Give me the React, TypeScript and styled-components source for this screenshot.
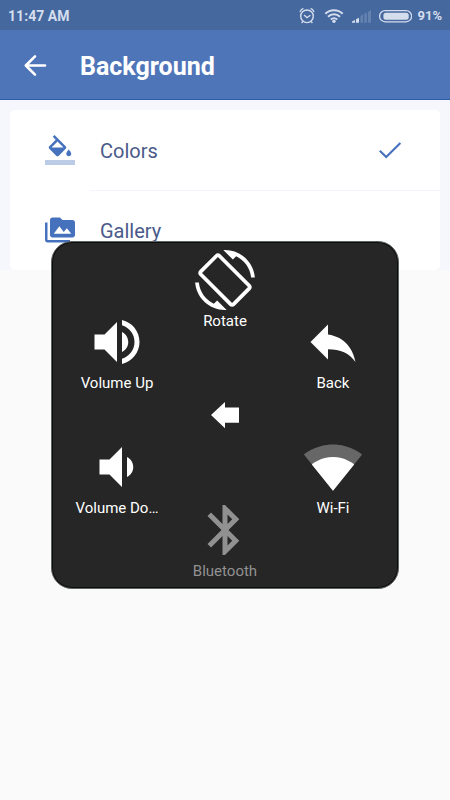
import React from "react";
import styled, { createGlobalStyle } from "styled-components";

const GlobalStyle = createGlobalStyle`
  *, *::before, *::after { box-sizing: border-box; }
  body { margin: 0; background: #fafafa; font-family: Roboto, "Liberation Sans", sans-serif; }
`;

const Screen = styled.div`
  position: relative;
  width: 450px;
  height: 800px;
  overflow: hidden;
  background: #fafafa;
`;

const StatusBar = styled.div`
  display: flex;
  align-items: center;
  justify-content: space-between;
  height: 30px;
  padding: 2px 8px 0;
  background: #45689f;
  color: #d5deed;
  font-size: 14px;
  font-weight: 700;
  line-height: 28px;
`;

const Clock = styled.span`
  letter-spacing: 0.05px;
`;

const StatusIcons = styled.div`
  display: flex;
  align-items: center;
  height: 28px;
`;

const BatteryText = styled.span`
  margin-left: 5px;
  font-size: 13px;
`;

const Toolbar = styled.header`
  display: flex;
  align-items: center;
  gap: 30px;
  height: 70px;
  padding: 2px 20px 0;
  background: #4f75b9;
  border-bottom: 1px solid #2c5da9;
  color: #fff;
`;

const Title = styled.h1`
  margin: 0;
  padding-top: 2px;
  font-size: 25px;
  font-weight: 700;
  line-height: 32px;
`;

const Section = styled.main`
  padding: 10px 10px 0;
  height: 170px;
  background: #f5f7fd;
`;

const Card = styled.div`
  height: 160px;
  border-radius: 5px;
  background: #fff;
`;

const Row = styled.div`
  display: flex;
  align-items: center;
  height: 80px;
  padding-left: 35px;
  color: #4672bd;
`;

const RowBody = styled.div<{ $divided?: boolean }>`
  display: flex;
  flex: 1;
  align-items: center;
  justify-content: space-between;
  height: 80px;
  margin-left: 15px;
  padding: 0 35px 0 10px;
  box-shadow: ${(p) => (p.$divided ? "0 1px 0 #f3f5fc" : "none")};
`;

const RowLabel = styled.span`
  padding-top: 1px;
  color: #4a5a8a;
  font-size: 20px;
  line-height: 26px;
`;

const Panel = styled.div`
  position: absolute;
  left: 51px;
  top: 241px;
  display: flex;
  justify-content: center;
  width: 348px;
  height: 348px;
  border: 1px solid #5f6465;
  border-radius: 21px;
  background: #262626;
  box-shadow: inset 0 0 0 1px #0c0c0c;
`;

const Column = styled.div<{ $top: number; $bottom: number }>`
  display: flex;
  flex-direction: column;
  align-items: center;
  justify-content: space-between;
  width: 108px;
  padding: ${(p) => p.$top}px 0 ${(p) => p.$bottom}px;
`;

const Action = styled.button<{ $dim?: boolean }>`
  display: flex;
  flex-direction: column;
  align-items: center;
  width: 108px;
  height: 83px;
  padding: 0;
  border: 0;
  background: none;
  color: ${(p) => (p.$dim ? "#919191" : "#fff")};
  font-family: inherit;
`;

const ActionLabel = styled.span`
  font-size: 15px;
  line-height: 23px;
  text-align: center;
  white-space: nowrap;
`;

const Icon = styled.svg`
  display: block;
  flex: none;
`;

const IconButton = styled.button`
  padding: 0;
  border: 0;
  background: none;
  color: inherit;
`;

const actions = {
  rotate: (
    <path d="M16.48 2.52c3.27 1.55 5.61 4.72 5.97 8.48h1.5C23.44 4.84 18.29 0 12 0l-.66.03 3.81 3.81 1.33-1.32zm-6.25-.77c-.59-.59-1.54-.59-2.12 0L1.75 8.11c-.59.59-.59 1.54 0 2.12l12.02 12.02c.59.59 1.54.59 2.12 0l6.36-6.36c.59-.59.59-1.54 0-2.12L10.23 1.75zm4.6 19.44L2.81 9.17l6.36-6.36 12.02 12.02-6.36 6.36zm-7.31.29C4.25 19.94 1.91 16.76 1.55 13H.05C.56 19.16 5.71 24 12 24l.66-.03-3.81-3.81-1.33 1.32z" />
  ),
  volumeUp: (
    <path d="M3 9v6h4l5 5V4L7 9H3zm13.5 3c0-1.77-1.02-3.29-2.5-4.03v8.05c1.48-.73 2.5-2.25 2.5-4.02zM14 3.23v2.06c2.89.86 5 3.54 5 6.71s-2.11 5.85-5 6.71v2.06c4.01-.91 7-4.49 7-8.77s-2.99-7.86-7-8.77z" />
  ),
  volumeDown: (
    <path d="M18.5 12c0-1.77-1.02-3.29-2.5-4.03v8.05c1.48-.73 2.5-2.25 2.5-4.02zM5 9v6h4l5 5V4L9 9H5z" />
  ),
  back: <path d="M10 9V5l-7 7 7 7v-4.1c5 0 8.5 1.6 11 5.1-1-5-4-10-11-11z" />,
  wifi: (
    <>
      <path
        opacity=".3"
        d="M12.01 21.49L23.64 7c-.45-.34-4.93-4-11.64-4C5.28 3 .81 6.66.36 7l11.63 14.49.01.01.01-.01z"
      />
      <path d="M3.53 10.95l8.46 10.54.01.01.01-.01 8.46-10.54C20.04 10.62 16.81 8 12 8c-4.81 0-8.04 2.62-8.47 2.95z" />
    </>
  ),
  bluetooth: (
    <path d="M17.71 7.71L12 2h-1v7.59L6.41 5 5 6.41 10.59 12 5 17.59 6.41 19 11 14.41V22h1l5.71-5.71-4.3-4.29 4.3-4.29zM13 5.83l1.88 1.88L13 9.59V5.83zm1.88 10.46L13 18.17v-3.76l1.88 1.88z" />
  ),
};

function QuickAction({ icon, label, dim }: { icon: keyof typeof actions; label: string; dim?: boolean }) {
  return (
    <Action $dim={dim}>
      <Icon width="60" height="60" viewBox="0 0 24 24" fill="currentColor">
        {actions[icon]}
      </Icon>
      <ActionLabel>{label}</ActionLabel>
    </Action>
  );
}

function StatusGlyphs() {
  return (
    <Icon width="114" height="28" viewBox="298 1 114 28" fill="none" stroke="#d5deed">
      <circle cx="307" cy="15.3" r="6.3" strokeWidth="1.4" />
      <path d="M304 14l3 2.6 3.4-2.4M300 11.2q.8-3 3.4-3.8M314 11.2q-.8-3-3.4-3.8M303 20.4l-1.4 1.6M311 20.4l1.4 1.6" strokeWidth="1.3" />
      <path d="M325.3 12.8a12.5 12.5 0 0 1 17.4 0M328 15.8a8.6 8.6 0 0 1 12 0M330.8 18.4a4.7 4.7 0 0 1 6.4 0" strokeWidth="2" />
      <circle cx="334" cy="20.3" r="1.7" fill="#d5deed" stroke="none" />
      <g stroke="none" fill="#d5deed">
        <path d="M352 21.7v-1.2l3-1.5v2.7zM356 21.7v-3.4l3-1.6v5z" />
        <path opacity=".22" d="M360.4 21.7v-6.6l2.6-1.6v8.2zM364.2 21.7v-8.6l2.6-1.6v10.2zM368 21.7V11l3-2v12.7z" />
        <rect x="383.4" y="11.7" width="25.3" height="7" rx="2.5" />
      </g>
      <rect x="379.6" y="9.6" width="32" height="11.2" rx="5.6" strokeWidth="1.3" />
    </Icon>
  );
}

export default function App() {
  return (
    <>
      <GlobalStyle />
      <Screen>
        <StatusBar>
          <Clock>11:47 AM</Clock>
          <StatusIcons>
            <StatusGlyphs />
            <BatteryText>91%</BatteryText>
          </StatusIcons>
        </StatusBar>
        <Toolbar>
          <IconButton aria-label="Navigate up">
            <Icon width="30" height="30" viewBox="20 50.5 30 30" fill="none" stroke="currentColor" strokeWidth="2.6" strokeLinecap="round" strokeLinejoin="round">
              <path d="M35 55.8L25.8 65l9.2 9.2M26 65h19" />
            </Icon>
          </IconButton>
          <Title>Background</Title>
        </Toolbar>
        <Section>
          <Card>
            <Row>
              <Icon width="30" height="30" viewBox="0 0 24 24" fill="currentColor">
                <path d="M16.56 8.94L7.62 0 6.21 1.41l2.38 2.38-5.15 5.15c-.59.59-.59 1.54 0 2.12l5.5 5.5c.29.29.68.44 1.06.44s.77-.15 1.06-.44l5.5-5.5c.59-.58.59-1.53 0-2.12zM5.21 10L10 5.21 14.79 10H5.21zM19 11.5s-2 2.17-2 3.5c0 1.1.9 2 2 2s2-.9 2-2c0-1.33-2-3.5-2-3.5z" />
                <path opacity=".36" d="M0 20h24v4H0z" />
              </Icon>
              <RowBody $divided>
                <RowLabel>Colors</RowLabel>
                <Icon width="30" height="30" viewBox="375 135 30 30" fill="none" stroke="currentColor" strokeWidth="2.1">
                  <path d="M379.8 150.7l6.4 6.4 14.2-14.2" />
                </Icon>
              </RowBody>
            </Row>
            <Row>
              <Icon width="30" height="30" viewBox="0 0 24 24" fill="currentColor">
                <path d="M2 6H0v5h.01L0 20c0 1.1.9 2 2 2h18v-2H2V6zm20-2h-8l-2-2H6c-1.1 0-1.99.9-1.99 2L4 16c0 1.1.9 2 2 2h16c1.1 0 2-.9 2-2V6c0-1.1-.9-2-2-2zM7 15l4.5-6 3.5 4.51 2.5-3.01L21 15H7z" />
              </Icon>
              <RowBody>
                <RowLabel>Gallery</RowLabel>
              </RowBody>
            </Row>
          </Card>
        </Section>
        <Panel>
          <Column $top={70} $bottom={68}>
            <QuickAction icon="volumeUp" label="Volume Up" />
            <QuickAction icon="volumeDown" label="Volume Do…" />
          </Column>
          <Column $top={7.5} $bottom={5.5}>
            <QuickAction icon="rotate" label="Rotate" />
            <IconButton aria-label="Previous">
              <Icon width="30" height="28" viewBox="210 402 30 28" fill="#fff">
                <path d="M211 415l14-13v5.4h14v15.4h-14v5.4z" />
              </Icon>
            </IconButton>
            <QuickAction icon="bluetooth" label="Bluetooth" dim />
          </Column>
          <Column $top={70} $bottom={68}>
            <QuickAction icon="back" label="Back" />
            <QuickAction icon="wifi" label="Wi-Fi" />
          </Column>
        </Panel>
      </Screen>
    </>
  );
}
